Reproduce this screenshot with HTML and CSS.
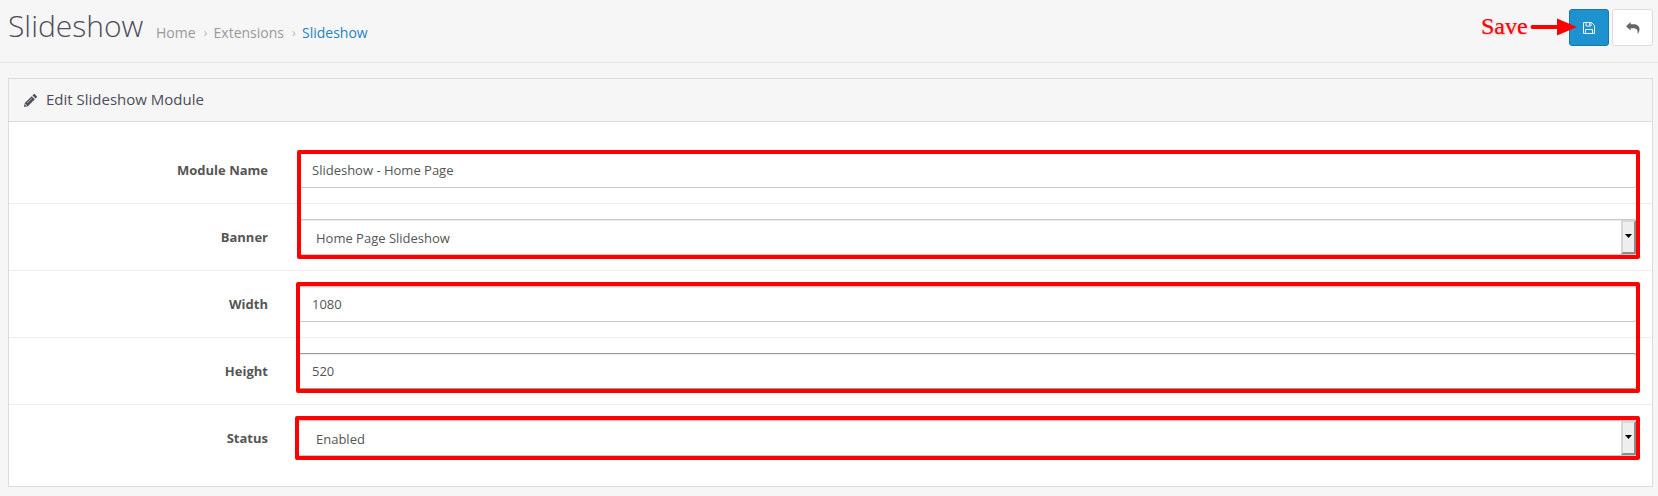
FILE: index.html
```html
<!DOCTYPE html>
<html lang="en">
<head>
<meta charset="utf-8">
<title>Slideshow</title>
<link rel="stylesheet" href="styles.css">
</head>
<body>
<header class="page-header">
  <h1>Slideshow</h1>
  <nav class="breadcrumb">
    <a class="home">Home</a><span class="sep">›</span><a class="ext">Extensions</a><span class="sep">›</span><a class="current">Slideshow</a>
  </nav>
  <div class="actions">
    <button class="btn primary" aria-label="Save">
      <svg width="12" height="12" viewBox="0 0 12 12" fill="none" stroke="#fff" stroke-width=".9"><path d="M.5.5h8l3 3v8H.5zM3 .5v3.500h5V.5M2.500 11.500V7.500h7v4M6.500 1v2.200"/></svg>
    </button>
    <button class="btn" aria-label="Back">
      <svg width="14" height="12" viewBox="0 0 14 12"><path fill="#666" d="M0 4.200 4.600 0v2.300h2.400c4.500 0 6.500 2 6.500 5 0 1.500-.6 3-1.500 4.200-.3.300-.6.100-.5-.300C12 7.800 10.500 6.200 7 6.200H4.600v2.400z"/></svg>
    </button>
  </div>
</header>
<main class="panel">
  <div class="panel-heading">
    <svg width="13" height="13" viewBox="0 0 13 13" fill="#4c4d5a"><path d="M0 13 .8 9.100 7.700 2.200 10.800 5.300 3.900 12.200zM8.500 1.400 9.600.3q.6-.6 1.200 0L12.700 2.200q.6.600 0 1.200L11.600 4.500z"/><path d="M1.500 9.900v1h1v1M3.200 9 8 4.200" fill="none" stroke="#f6f6f6" stroke-width=".6"/></svg>
    <h3>Edit Slideshow Module</h3>
  </div>
  <form class="panel-body">
    <div class="row"><label>Module Name</label><div class="control">Slideshow - Home Page</div></div>
    <div class="row"><label>Banner</label><div class="control select">Home Page Slideshow<span class="drop"><svg width="7" height="4" viewBox="0 0 7 4"><path d="M0 0h7L3.500 4z"/></svg></span></div></div>
    <div class="row"><label>Width</label><div class="control">1080</div></div>
    <div class="row"><label>Height</label><div class="control hover">520</div></div>
    <div class="row"><label>Status</label><div class="control select">Enabled<span class="drop"><svg width="7" height="4" viewBox="0 0 7 4"><path d="M0 0h7L3.500 4z"/></svg></span></div></div>
  </form>
</main>
<div class="mark mark-module"></div>
<div class="mark mark-size"></div>
<div class="mark mark-status"></div>
<div class="note">Save</div>
<svg class="arrow" width="48" height="18" viewBox="0 0 48 18" fill="red"><path d="M2.500 7H27V.500L47 9 27 17.500V11H2.500a2 2 0 0 1 0-4z"/></svg>
</body>
</html>
```
FILE: styles.css
```css
* { box-sizing: border-box; }
body {
  margin: 0;
  height: 496px;
  overflow: hidden;
  background: #f6f6f6;
  color: #555;
  font: 13px/20px "Open Sans", sans-serif;
}
.page-header {
  display: flex;
  height: 63px;
  padding: 9px 5px 0 8px;
  border-bottom: 1px solid #e7e7e7;
}
h1 {
  margin: 0;
  width: 148px;
  font-size: 30px;
  font-weight: 300;
  line-height: 34px;
  color: #4c4d5a;
  white-space: nowrap;
}
.breadcrumb {
  display: flex;
  padding-top: 13px;
  font-size: 14px;
  line-height: 21px;
  color: #999;
}
.sep { width: 18px; padding-left: 8px; color: #bbb; font-size: 13px; }
.current { color: #1e83c8; }
.actions { display: flex; gap: 3px; margin-left: auto; }
.btn {
  display: flex;
  align-items: center;
  justify-content: center;
  width: 41px;
  height: 37px;
  padding: 0;
  background: #fff;
  border: 1px solid #ddd;
  border-radius: 3px;
}
.btn.primary { width: 40px; background: #1e91cf; border-color: #1978ab; }
.panel {
  margin: 15px 5px 0 8px;
  height: 409px;
  background: #fff;
  border: 1px solid #dcdcdc;
}
.panel-heading {
  display: flex;
  align-items: center;
  gap: 9px;
  height: 43px;
  padding-left: 15px;
  background: #f6f6f6;
  border-bottom: 1px solid #dcdcdc;
}
h3 { margin: 0; padding-bottom: 2px; font-size: 15px; font-weight: 400; color: #4c4d5a; }
.panel-body { padding: 15px 0; }
.row { display: flex; padding: 15px 15px 15px 0; }
.row + .row { border-top: 1px solid #ededed; }
label {
  width: 289px;
  padding: 8px 30px 0 0;
  font-weight: 700;
  text-align: right;
}
.control {
  flex: 1;
  display: flex;
  align-items: center;
  height: 36px;
  padding-left: 13px;
  border: 1px solid #c8c8c8;
  border-radius: 3px;
  box-shadow: inset 0 1px 1px rgba(0, 0, 0, .075);
}
.control.hover { border-color: #999; }
.select { padding: 1px 0 0 17px; }
.drop {
  display: flex;
  align-items: center;
  justify-content: center;
  width: 15px;
  height: 34px;
  margin: -1px 0 0 auto;
  padding-bottom: 2px;
  background: #eee;
  border: 2px solid #d8d8d8;
  border-right-color: #8c8c8c;
  border-bottom-color: #8c8c8c;
}
.mark { position: absolute; border: 4px solid red; border-radius: 2px; }
.mark-module { left: 297px; top: 150px; width: 1343px; height: 109px; }
.mark-size { left: 296px; top: 282px; width: 1344px; height: 111px; }
.mark-status { left: 295px; top: 416px; width: 1345px; height: 44px; }
.note {
  position: absolute;
  left: 1481px;
  top: 12px;
  font: 24px/28px "Liberation Serif", serif;
  color: red;
  -webkit-text-stroke: .2px red;
  text-shadow: 1px 1px 2px rgba(0, 0, 0, .2);
}
.arrow { position: absolute; left: 1530px; top: 18px; }
```
